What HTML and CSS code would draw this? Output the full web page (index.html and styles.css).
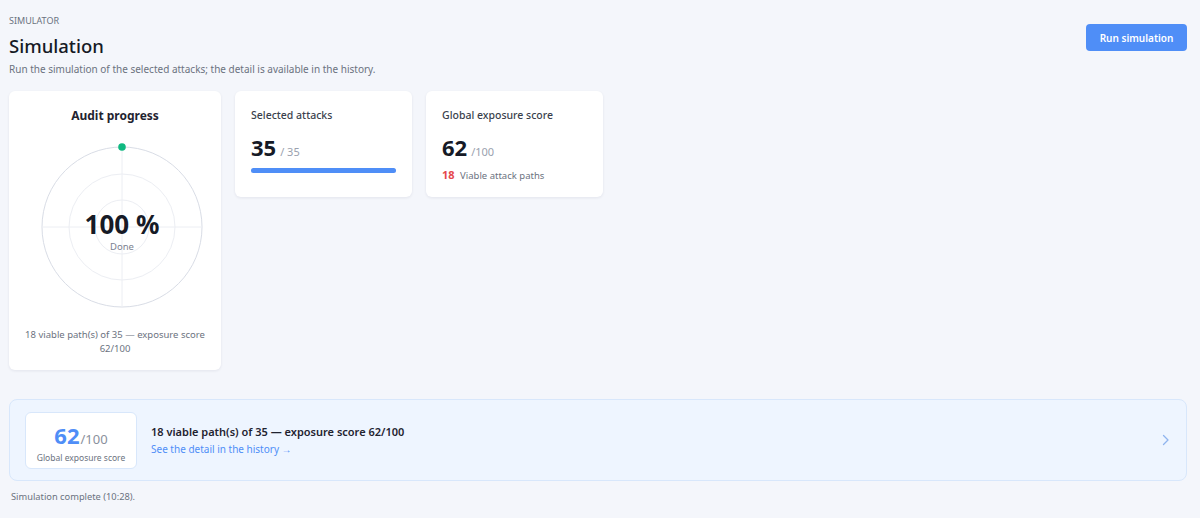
FILE: index.html
```html
<!DOCTYPE html>
<html>
	<head>
		<meta charset="utf-8">
		<title>Simulator</title>
		<link rel="stylesheet" href="styles.css">
	</head>
	<body>
		<header class="page-head">
			<div class="titles">
				<div class="eyebrow">SIMULATOR</div>
				<h1>Simulation</h1>
				<p class="lead">Run the simulation of the selected attacks; the detail is available in the history.</p>
			</div>
			<button class="btn-run">Run simulation</button>
		</header>

		<section class="cards">
			<div class="card card-audit">
				<h2>Audit progress</h2>
				<div class="radar">
					<svg width="164" height="164" viewBox="0 0 164 164">
						<circle cx="82" cy="82" r="80" fill="none" stroke="#d9dde6" stroke-width="1"/>
						<circle cx="82" cy="82" r="53" fill="none" stroke="#eceef3" stroke-width="1"/>
						<circle cx="82" cy="82" r="27" fill="none" stroke="#eceef3" stroke-width="1"/>
						<line x1="82" y1="2" x2="82" y2="162" stroke="#eceef3"/>
						<line x1="2" y1="82" x2="162" y2="82" stroke="#eceef3"/>
						<circle cx="82" cy="2" r="3.8" fill="#10b981"/>
					</svg>
					<div class="radar-label">
						<div class="pct">100 %</div>
						<div class="done">Done</div>
					</div>
				</div>
				<p class="audit-note">18 viable path(s) of 35 — exposure score 62/100</p>
			</div>

			<div class="card card-stat">
				<h3>Selected attacks</h3>
				<div class="stat"><span class="big">35</span><span class="of">/ 35</span></div>
				<div class="bar"><div class="bar-fill" style="width: 100%"></div></div>
			</div>

			<div class="card card-stat">
				<h3>Global exposure score</h3>
				<div class="stat"><span class="big">62</span><span class="of">/100</span></div>
				<div class="paths"><span class="red">18</span> Viable attack paths</div>
			</div>
		</section>

		<a class="result" href="#">
			<div class="score-box">
				<div><span class="score">62</span><span class="score-of">/100</span></div>
				<div class="score-label">Global exposure score</div>
			</div>
			<div class="result-text">
				<div class="result-title">18 viable path(s) of 35 — exposure score 62/100</div>
				<div class="result-link">See the detail in the history →</div>
			</div>
			<svg class="chevron" width="8" height="12" viewBox="0 0 8 12">
				<path d="M1.5 1.5 L6 6 L1.5 10.5" fill="none" stroke="#8fb4ee" stroke-width="1.3" stroke-linecap="round" stroke-linejoin="round"/>
			</svg>
		</a>

		<p class="status">Simulation complete (10:28).</p>
	</body>
</html>
```

FILE: styles.css
```css
body {
	margin: 0;
	padding: 13px 13px 0 9px;
	background-color: #f4f6fb;
	font-family: "Noto Sans", "Open Sans", sans-serif;
	color: #1f2330;
}

.page-head {
	display: flex;
	justify-content: space-between;
	align-items: flex-start;
}

.eyebrow {
	font-size: 9px;
	color: #6b7280;
	line-height: 16px;
}

h1 {
	margin: 4px 0 0;
	font-size: 18.5px;
	font-weight: 500;
	line-height: 26px;
	color: #161a26;
}

.lead {
	margin: 2px 0 0;
	font-size: 10px;
	color: #6b7280;
	line-height: 16px;
}

.btn-run {
	margin-top: 11px;
	width: 101px;
	height: 27px;
	border: none;
	border-radius: 4px;
	background-color: #4f8ef7;
	color: #fff;
	font-family: inherit;
	font-size: 10px;
	font-weight: 600;
	cursor: pointer;
}

.cards {
	display: flex;
	align-items: flex-start;
	gap: 14px;
	margin-top: 14px;
}

.card {
	background-color: #fff;
	border-radius: 6px;
	box-shadow: 0 1px 3px rgba(20, 30, 60, 0.08);
}

.card-audit {
	width: 212px;
	height: 279px;
	display: flex;
	flex-direction: column;
	align-items: center;
}

.card-audit h2 {
	margin: 15px 0 0;
	font-size: 12px;
	font-weight: 700;
	line-height: 20px;
}

.radar {
	position: relative;
	margin: 19px 0 0 14px;
	width: 164px;
	height: 164px;
}

.radar svg {
	display: block;
	overflow: visible;
}

.radar-label {
	position: absolute;
	inset: 0;
	display: flex;
	flex-direction: column;
	align-items: center;
	justify-content: center;
	padding-top: 10px;
}

.pct {
	font-size: 26px;
	font-weight: 700;
	line-height: 26px;
	color: #161a26;
}

.done {
	margin-top: 3px;
	font-size: 9.5px;
	color: #7b8190;
	line-height: 13px;
}

.audit-note {
	margin: 19px 8px 0;
	font-size: 9.5px;
	line-height: 14px;
	color: #6b7280;
	text-align: center;
}

.card-stat {
	width: 177px;
	height: 106px;
	box-sizing: border-box;
	padding: 15px 16px 0;
}

.card-stat h3 {
	margin: 0;
	font-size: 10.5px;
	font-weight: 500;
	color: #3a3f4d;
	line-height: 18px;
}

.stat {
	margin-top: 9px;
	display: flex;
	align-items: baseline;
	gap: 4px;
}

.big {
	font-size: 22px;
	font-weight: 700;
	line-height: 28px;
	color: #161a26;
}

.of {
	font-size: 11px;
	color: #9aa1ae;
}

.bar {
	margin-top: 7px;
	height: 5px;
	border-radius: 3px;
	background-color: #e5e9f2;
}

.bar-fill {
	height: 100%;
	border-radius: 3px;
	background-color: #4f8ef7;
}

.paths {
	margin-top: 6px;
	font-size: 9.5px;
	color: #6b7280;
}

.paths .red {
	color: #e5484d;
	font-weight: 700;
	font-size: 11px;
	margin-right: 3px;
}

.result {
	display: flex;
	align-items: center;
	margin-top: 29px;
	height: 82px;
	box-sizing: border-box;
	padding: 0 16px 0 15px;
	background-color: #eef5ff;
	border: 1px solid #d8e7fb;
	border-radius: 8px;
	text-decoration: none;
	color: inherit;
}

.score-box {
	width: 112px;
	height: 57px;
	box-sizing: border-box;
	padding-top: 10px;
	background-color: #fff;
	border: 1px solid #d8e7fb;
	border-radius: 6px;
	text-align: center;
}

.score {
	font-size: 22px;
	font-weight: 700;
	color: #4f8ef7;
	line-height: 24px;
}

.score-of {
	font-size: 13px;
	color: #8a909c;
	margin-left: 1px;
}

.score-label {
	font-size: 8.5px;
	color: #6b7280;
	margin-top: 3px;
}

.result-text {
	flex: 1;
	margin-left: 14px;
}

.result-title {
	font-size: 11px;
	font-weight: 600;
	color: #1f2330;
	line-height: 18px;
}

.result-link {
	font-size: 10px;
	color: #4f8ef7;
	line-height: 16px;
}

.status {
	margin: 9px 0 0 2px;
	font-size: 9.3px;
	color: #6b7280;
}
```
